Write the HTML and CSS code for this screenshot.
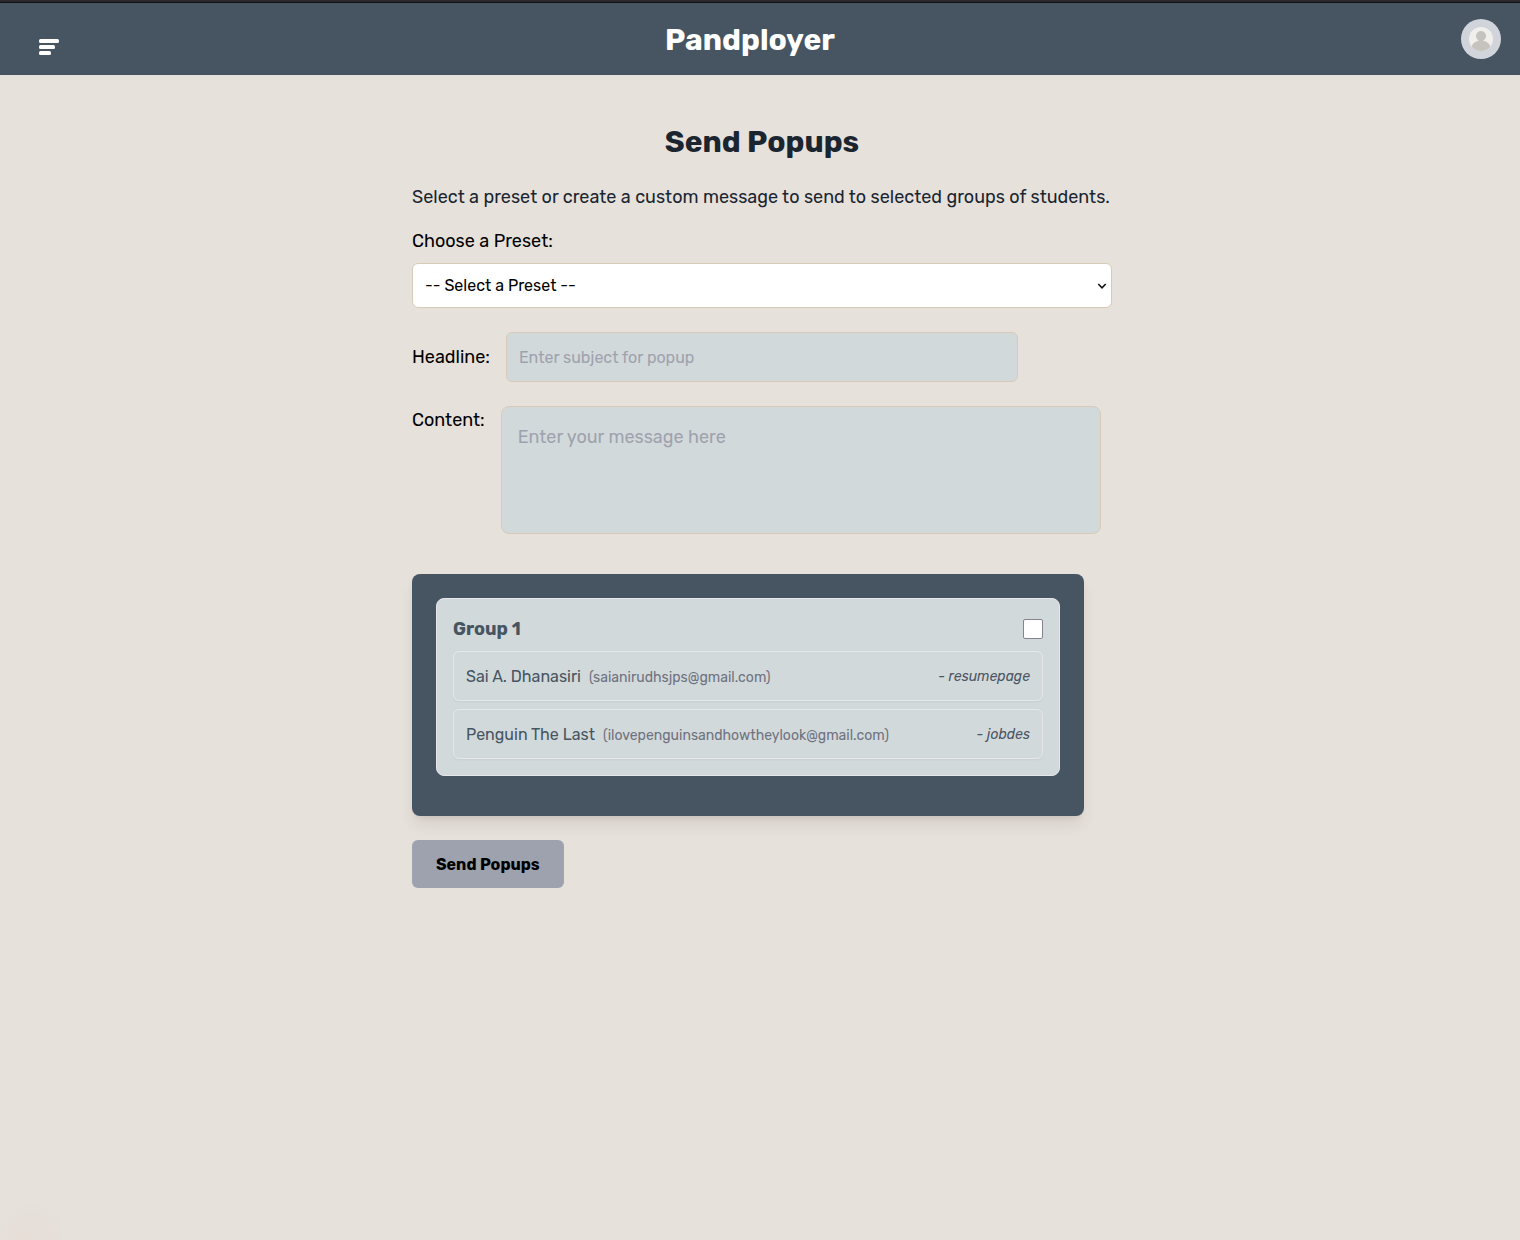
FILE: index.html
```html
<!DOCTYPE html>
<html lang="en">
<head>
<meta charset="utf-8">
<meta name="viewport" content="width=device-width, initial-scale=1">
<title>Pandployer</title>
<link rel="stylesheet" href="styles.css">
</head>
<body>
<header class="topbar">
  <button class="menu-button" type="button" aria-label="Open menu">
    <svg width="20" height="16" viewBox="0 0 20 16" fill="#fff" aria-hidden="true">
      <rect width="20" height="4" rx="1.5"/>
      <rect y="6" width="16" height="4" rx="1.5"/>
      <rect y="12" width="12" height="4" rx="1.5"/>
    </svg>
  </button>
  <a class="brand" href="#">Pandployer</a>
  <button class="avatar" type="button" aria-label="Account">
    <svg width="24" height="24" viewBox="0 0 24 24" aria-hidden="true">
      <defs><clipPath id="face"><circle cx="12" cy="12" r="12"/></clipPath></defs>
      <circle cx="12" cy="12" r="12" fill="#f1efeb"/>
      <g clip-path="url(#face)" fill="#c6c3be">
        <circle cx="12" cy="9" r="5"/>
        <path d="M9.500 12h5v2c4 .6 6.500 3 7 7v3h-19v-3c.5-4 3-6.400 7-7Z"/>
      </g>
    </svg>
  </button>
</header>
<main class="page">
  <h1 class="title">Send Popups</h1>
  <p class="intro">Select a preset or create a custom message to send to selected groups of students.</p>
  <form class="form">
    <label class="label" for="preset">Choose a Preset:</label>
    <div class="select-wrap">
      <select class="select" id="preset"><option>-- Select a Preset --</option></select>
      <svg class="chevron" width="10" height="8" viewBox="0 0 10 8" fill="none" stroke="#111" stroke-width="1.6" aria-hidden="true"><path d="M1.300 2L5 5.800L8.700 2"/></svg>
    </div>
    <div class="field">
      <label class="label" for="headline">Headline:</label>
      <input class="text-input" id="headline" type="text" placeholder="Enter subject for popup">
    </div>
    <div class="field field-top">
      <label class="label" for="content">Content:</label>
      <textarea class="textarea" id="content" placeholder="Enter your message here"></textarea>
    </div>
    <section class="groups">
      <div class="group">
        <div class="group-head">
          <label class="group-name" for="group1">Group 1</label>
          <input class="check" id="group1" type="checkbox">
        </div>
        <ul class="members">
          <li class="member"><span class="person">Sai A. Dhanasiri<span class="email">(saianirudhsjps@gmail.com)</span></span><span class="role">- resumepage</span></li>
          <li class="member"><span class="person">Penguin The Last<span class="email">(ilovepenguinsandhowtheylook@gmail.com)</span></span><span class="role">- jobdes</span></li>
        </ul>
      </div>
    </section>
    <button class="send" type="button">Send Popups</button>
  </form>
</main>
</body>
</html>
```
FILE: styles.css
```css
*, *::before, *::after { box-sizing: border-box; }

body {
  margin: 0;
  min-height: 100vh;
  background: radial-gradient(circle at 30px 100%, #e7ddd7 0, #e6e1db 40px) #e6e1db;
  color: #000;
  font-family: Rubik, Inter, sans-serif;
  font-size: 16px;
  line-height: 24px;
}

button, input, select, textarea { font: inherit; color: inherit; }

.topbar {
  display: flex;
  align-items: center;
  justify-content: space-between;
  height: 75px;
  padding: 1px 19px 0 39px;
  border-top: 2px solid #2b292e;
  box-shadow: inset 0 1px #0d1014;
  background: #465561;
}

.menu-button {
  display: flex;
  padding: 16px 0 0;
  border: 0;
  background: none;
}

.brand {
  margin-right: 20px;
  padding-top: 2px;
  color: #fff;
  font-size: 30px;
  font-weight: 700;
  line-height: 36px;
  text-decoration: none;
}

.avatar {
  display: grid;
  place-items: center;
  width: 40px;
  height: 40px;
  padding: 0;
  border: 0;
  border-radius: 50%;
  background: #d1d5db;
}

.page {
  width: 100%;
  max-width: 704px;
  margin: 0 auto;
  padding: 48px 0 48px 4px;
}

.title {
  margin: 0 0 22px;
  color: #1a2530;
  font-size: 30px;
  font-weight: 700;
  line-height: 38px;
  text-align: center;
}

.intro {
  margin: 0 0 16px;
  color: #1a2530;
  font-size: 18px;
  line-height: 28px;
}

.label { font-size: 18px; line-height: 28px; }

.form {
  display: flex;
  flex-direction: column;
  align-items: flex-start;
}

.select-wrap { position: relative; width: 100%; margin: 8px 0 24px; }

.select {
  display: block;
  width: 100%;
  height: 45px;
  padding: 0 12px;
  border: 1px solid #d9cab8;
  border-radius: 6px;
  background: #fff;
  appearance: none;
}

.chevron { position: absolute; top: 19px; right: 5px; pointer-events: none; }

.field { display: flex; align-items: center; gap: 16px; width: 100%; margin-bottom: 24px; }

.field-top { align-items: flex-start; margin-bottom: 40px; }

.text-input {
  width: 512px;
  height: 50px;
  padding: 12px;
  border: 1px solid #d9cab8;
  border-radius: 6px;
  background: #d2d9db;
}

.textarea {
  width: 600px;
  height: 128px;
  padding: 16px;
  border: 1px solid #d9cab8;
  border-radius: 8px;
  background: #d2d9db;
  font-size: 18px;
  line-height: 28px;
  resize: none;
}

::placeholder { color: #9ea2ae; opacity: 1; }

.groups {
  width: 96%;
  margin-bottom: 24px;
  padding: 24px 24px 40px;
  border-radius: 8px;
  background: #465561;
  box-shadow: 0 10px 15px -3px rgb(70 50 40 / 12%), 0 4px 6px -4px rgb(70 50 40 / 12%);
}

.group {
  padding: 16px;
  border: 1px solid #e5e7eb;
  border-radius: 8px;
  background: #d2d9db;
}

.group-head {
  display: flex;
  align-items: center;
  justify-content: space-between;
  margin-bottom: 8px;
}

.group-name { color: #465561; font-size: 18px; font-weight: 700; line-height: 28px; }

.check {
  width: 20px;
  height: 20px;
  margin: 0;
  border: 1px solid #858393;
  border-radius: 2px;
  background: #fff;
  appearance: none;
}

.members { display: grid; gap: 8px; margin: 0; padding: 0; list-style: none; }

.member {
  display: flex;
  align-items: center;
  justify-content: space-between;
  padding: 13px 12px 11px;
  border: 1px solid #e5e7eb;
  border-radius: 6px;
  box-shadow: 0 1px 2px rgb(0 0 0 / 5%);
}

.person { color: #465561; }
.email { margin-left: 8px; color: #6f7280; font-size: 14px; line-height: 20px; }
.role { color: #4b5563; font-size: 14px; font-style: italic; line-height: 20px; }

.send {
  height: 48px;
  padding: 2px 24px 0;
  border: 0;
  border-radius: 6px;
  background: #9ea2ae;
  font-weight: 700;
}
```
